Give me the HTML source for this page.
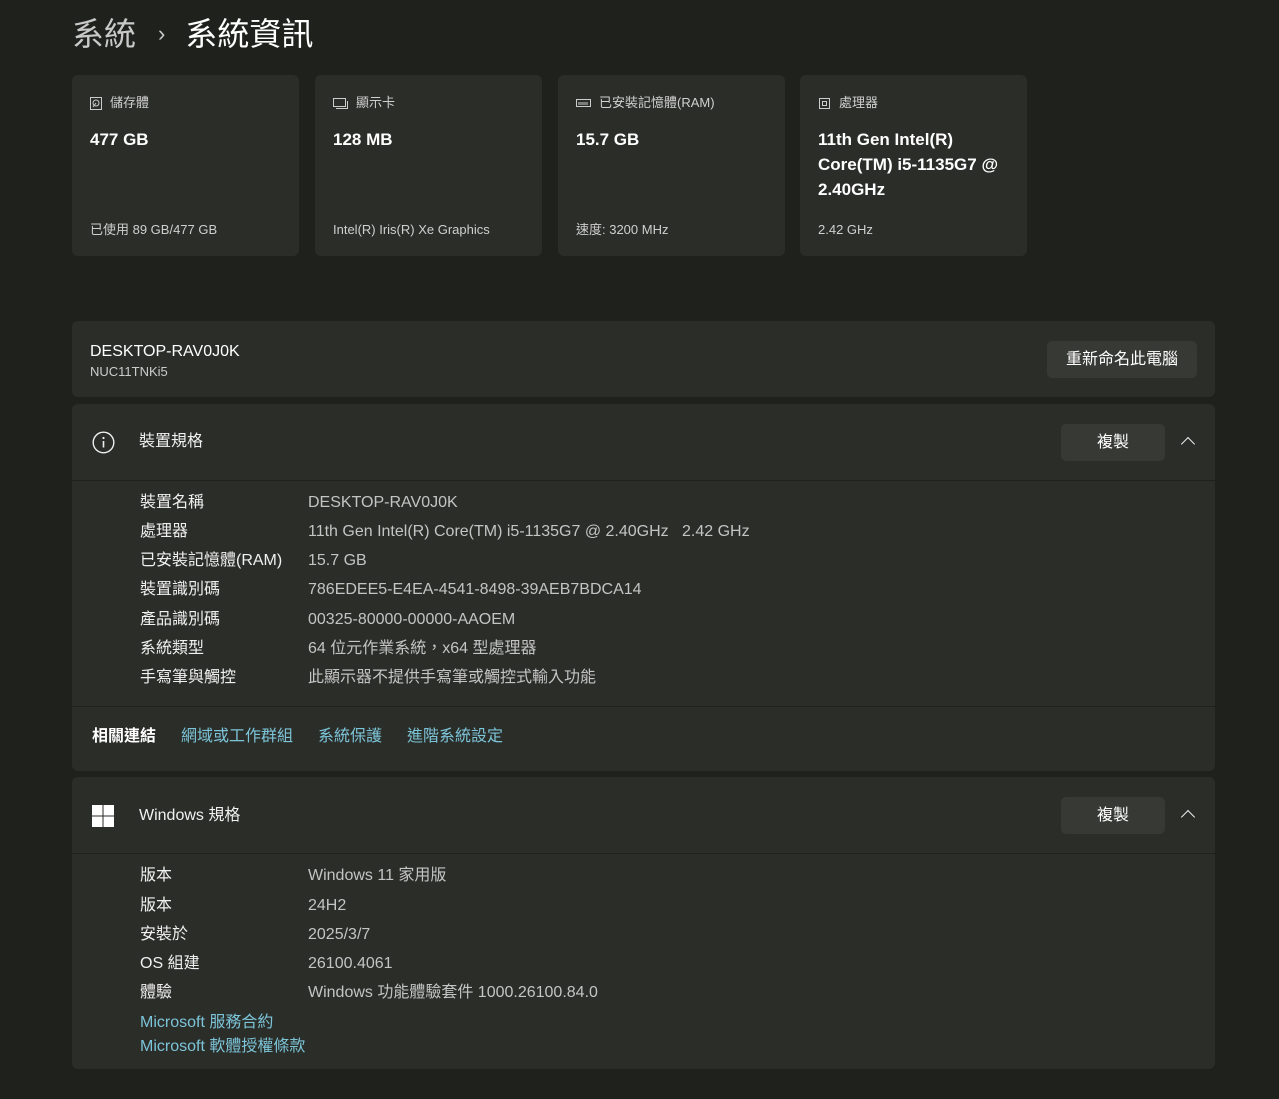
<!DOCTYPE html>
<html><head><meta charset="utf-8"><style>
*{margin:0;padding:0;box-sizing:border-box}
body{width:1279px;height:1099px;background:#1f211d;font-family:"Liberation Sans","Noto Sans CJK TC",sans-serif;color:#e6e6e6;position:relative;overflow:hidden}
.abs{position:absolute}
.title{left:72px;top:12px;font-size:32px;line-height:44px;color:#fff;white-space:nowrap}
.title .g{color:#c9c9c9}
.title .sep{font-size:22px;color:#ccc;margin:0 20px 0 22px;position:relative;top:-4px}
.card{position:absolute;top:75px;width:227px;height:181px;background:#2b2d29;border-radius:6px}
.card .h{position:absolute;left:18px;top:19px;font-size:13px;line-height:18px;color:#d0d0d0;display:flex;align-items:center;gap:8px}
.card .v{position:absolute;left:18px;top:52px;font-size:17px;font-weight:bold;color:#fff;line-height:25px;width:200px}
.card .s{position:absolute;left:18px;top:146px;font-size:13px;line-height:18px;color:#cfcfcf}
.panel{position:absolute;left:72px;width:1143px;background:#2b2d29;border-radius:6px}
.btn{position:absolute;background:#373934;border-radius:5px;color:#fff;font-size:16px;text-align:center}
.row{position:absolute;font-size:16px;line-height:22px;height:22px;white-space:nowrap}
.lab{color:#f0f0f0}
.val{color:#c4c4c4}
.line{position:absolute;left:0;width:1143px;height:1px;background:#1f211d}
.link{color:#7cc4d8}
.chev{position:absolute;width:10px;height:10px;border-left:1.6px solid #eee;border-top:1.6px solid #eee;transform:rotate(45deg)}
</style></head><body>
<div class="abs title"><span class="g">系統</span><span class="sep">›</span>系統資訊</div>

<div class="card" style="left:72px"><div class="h"><svg width="12" height="13" viewBox="0 0 12 13"><rect x=".5" y=".5" width="11" height="12" fill="none" stroke="#ccc"/><circle cx="6" cy="6" r="3" fill="none" stroke="#ccc"/><path d="M6 6 3 10" stroke="#ccc"/></svg>儲存體</div><div class="v">477 GB</div><div class="s">已使用 89 GB/477 GB</div></div>
<div class="card" style="left:315px"><div class="h"><svg width="15" height="11" viewBox="0 0 15 11"><rect x=".5" y=".5" width="12" height="8" fill="none" stroke="#ccc"/><path d="M3 10.5h11.5V3" fill="none" stroke="#ccc"/></svg>顯示卡</div><div class="v">128 MB</div><div class="s">Intel(R) Iris(R) Xe Graphics</div></div>
<div class="card" style="left:558px"><div class="h"><svg width="15" height="9" viewBox="0 0 15 9"><rect x=".5" y=".5" width="14" height="7" fill="none" stroke="#ccc"/><path d="M3 3v3M5 3v3M7 3v3M9 3v3M11 3v3" stroke="#ccc"/></svg>已安裝記憶體(RAM)</div><div class="v">15.7 GB</div><div class="s">速度: 3200 MHz</div></div>
<div class="card" style="left:800px"><div class="h"><svg width="13" height="13" viewBox="0 0 13 13"><rect x="1.5" y="1.5" width="10" height="10" fill="none" stroke="#ccc"/><rect x="4.5" y="4.5" width="4" height="4" fill="none" stroke="#ccc"/></svg>處理器</div><div class="v">11th Gen Intel(R) Core(TM) i5-1135G7 @ 2.40GHz</div><div class="s">2.42 GHz</div></div>

<div class="panel" style="top:321px;height:76px">
<div class="row" style="left:18px;top:20px;color:#fff">DESKTOP-RAV0J0K</div>
<div class="row" style="left:18px;top:40px;font-size:13px;color:#ccc">NUC11TNKi5</div>
<div class="btn" style="left:975px;top:20px;width:150px;height:37px;line-height:37px">重新命名此電腦</div>
</div>

<div class="panel" style="top:404px;height:367px">
<svg class="abs" style="left:20px;top:27px" width="23" height="23" viewBox="0 0 23 23"><circle cx="11.5" cy="11.5" r="10.3" fill="none" stroke="#eee" stroke-width="1.4"/><path d="M11.5 10v6.5" stroke="#eee" stroke-width="1.6"/><circle cx="11.5" cy="7" r="1.1" fill="#eee"/></svg>
<div class="row" style="left:67px;top:27px;color:#f0f0f0">裝置規格</div>
<div class="btn" style="left:989px;top:20px;width:104px;height:37px;line-height:37px">複製</div>
<div class="chev" style="left:1111px;top:35px"></div>
<div class="line" style="top:76px"></div>
<div class="row lab" style="left:68px;top:88px">裝置名稱</div><div class="row val" style="left:236px;top:88px">DESKTOP-RAV0J0K</div>
<div class="row lab" style="left:68px;top:117px">處理器</div><div class="row val" style="left:236px;top:117px">11th Gen Intel(R) Core(TM) i5-1135G7 @ 2.40GHz &nbsp;&nbsp;2.42 GHz</div>
<div class="row lab" style="left:68px;top:146px">已安裝記憶體(RAM)</div><div class="row val" style="left:236px;top:146px">15.7 GB</div>
<div class="row lab" style="left:68px;top:175px">裝置識別碼</div><div class="row val" style="left:236px;top:175px">786EDEE5-E4EA-4541-8498-39AEB7BDCA14</div>
<div class="row lab" style="left:68px;top:205px">產品識別碼</div><div class="row val" style="left:236px;top:205px">00325-80000-00000-AAOEM</div>
<div class="row lab" style="left:68px;top:234px">系統類型</div><div class="row val" style="left:236px;top:234px">64 位元作業系統，x64 型處理器</div>
<div class="row lab" style="left:68px;top:263px">手寫筆與觸控</div><div class="row val" style="left:236px;top:263px">此顯示器不提供手寫筆或觸控式輸入功能</div>
<div class="line" style="top:302px"></div>
<div class="row" style="left:20px;top:322px;font-weight:bold;color:#fff">相關連結</div>
<div class="row link" style="left:109px;top:322px">網域或工作群組</div>
<div class="row link" style="left:246px;top:322px">系統保護</div>
<div class="row link" style="left:335px;top:322px">進階系統設定</div>
</div>

<div class="panel" style="top:777px;height:292px">
<svg class="abs" style="left:20px;top:28px" width="22" height="22" viewBox="0 0 22 22" fill="#fff"><rect x="0" y="0" width="10.5" height="10.5"/><rect x="11.5" y="0" width="10.5" height="10.5"/><rect x="0" y="11.5" width="10.5" height="10.5"/><rect x="11.5" y="11.5" width="10.5" height="10.5"/></svg>
<div class="row" style="left:67px;top:28px;color:#f0f0f0">Windows 規格</div>
<div class="btn" style="left:989px;top:20px;width:104px;height:37px;line-height:37px">複製</div>
<div class="chev" style="left:1111px;top:35px"></div>
<div class="line" style="top:76px"></div>
<div class="row lab" style="left:68px;top:88px">版本</div><div class="row val" style="left:236px;top:88px">Windows 11 家用版</div>
<div class="row lab" style="left:68px;top:118px">版本</div><div class="row val" style="left:236px;top:118px">24H2</div>
<div class="row lab" style="left:68px;top:147px">安裝於</div><div class="row val" style="left:236px;top:147px">2025/3/7</div>
<div class="row lab" style="left:68px;top:176px">OS 組建</div><div class="row val" style="left:236px;top:176px">26100.4061</div>
<div class="row lab" style="left:68px;top:205px">體驗</div><div class="row val" style="left:236px;top:205px">Windows 功能體驗套件 1000.26100.84.0</div>
<div class="row link" style="left:68px;top:235px">Microsoft 服務合約</div>
<div class="row link" style="left:68px;top:259px">Microsoft 軟體授權條款</div>
</div>
</body></html>
